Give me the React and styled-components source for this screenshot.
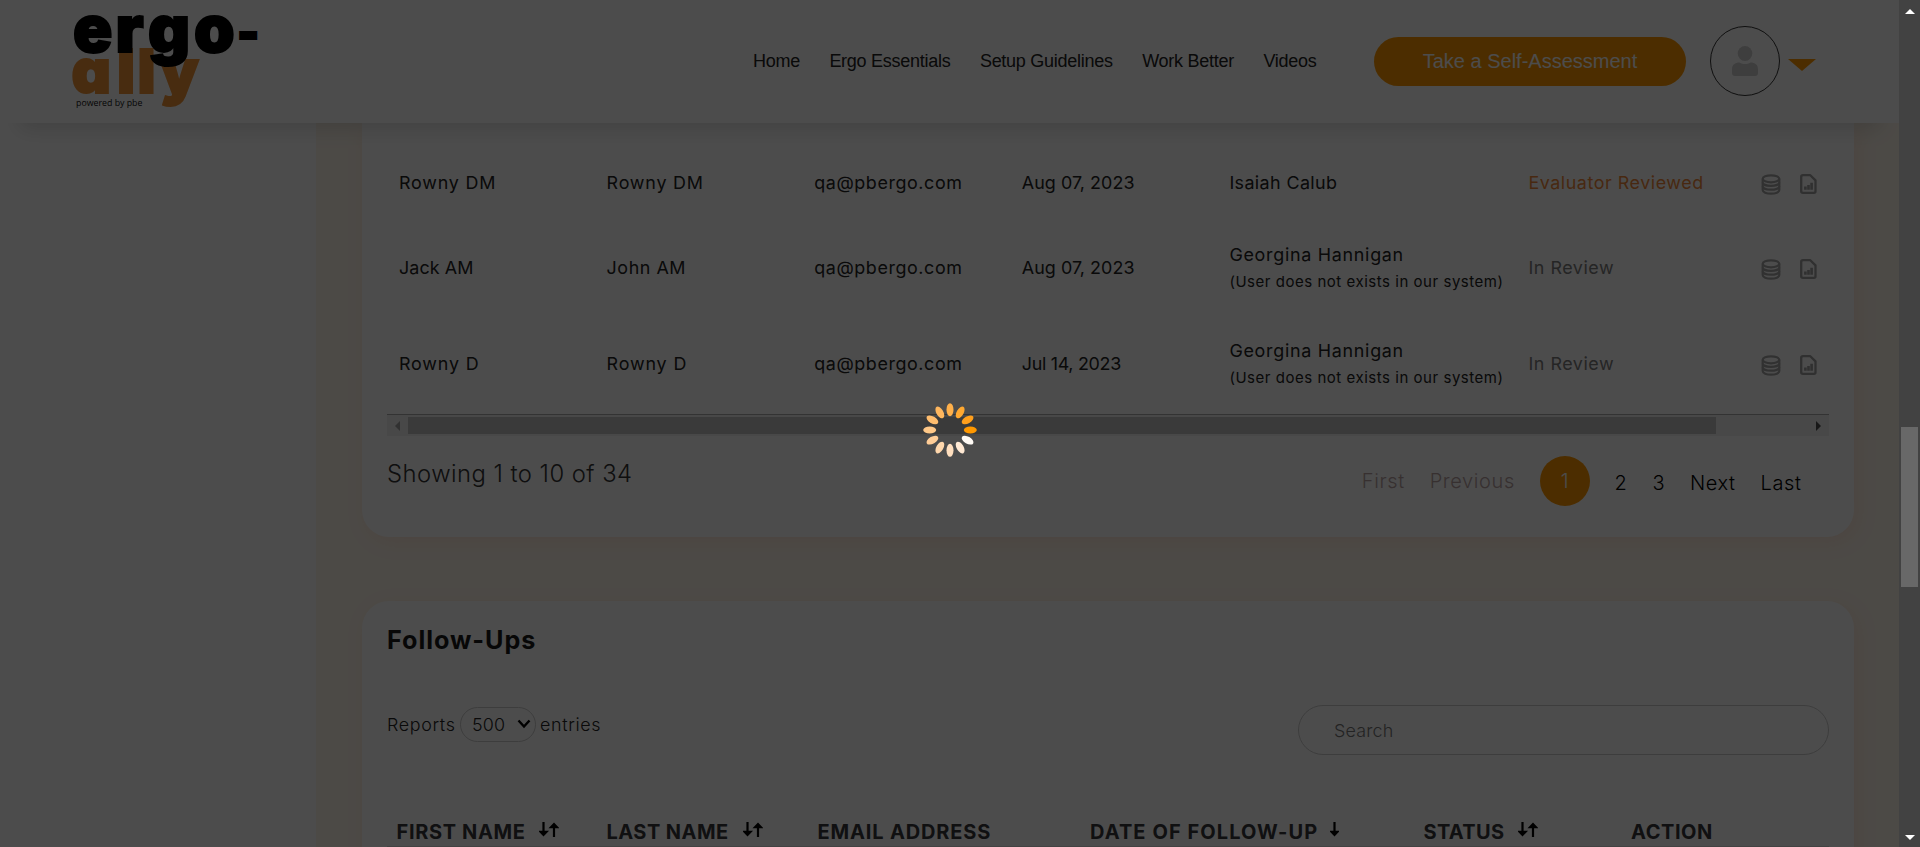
import React from "react";
import styled, { createGlobalStyle } from "styled-components";

const GlobalStyle = createGlobalStyle`
  * { box-sizing: border-box; }
  body { margin: 0; background: #fff; overflow: hidden; }
`;

const ORANGE = "#ff9800";

const Viewport = styled.div`
  display: flex;
  width: 1920px;
  height: 847px;
  overflow: hidden;
  font-family: Inter, "Open Sans", sans-serif;
`;

const Page = styled.div`
  position: relative;
  display: flex;
  flex-direction: column;
  width: 1899px;
  height: 847px;
  overflow: hidden;
  background: #fff;
`;

const Header = styled.header`
  position: relative;
  z-index: 2;
  display: flex;
  align-items: center;
  flex: 0 0 123px;
  padding: 0 83px 2px 70px;
  background: #fff;
  box-shadow: 0 25px 20px -20px rgba(0, 0, 0, 0.15);
`;

const Logo = styled.svg`
  display: block;
  align-self: flex-start;
  width: 200px;
  height: 121px;
  overflow: visible;
  font-family: Inter, sans-serif;
  font-weight: 900;
`;

const LogoTop = styled.text`
  font-size: 65px;
  fill: #000;
  stroke: #000;
  stroke-width: 2px;
`;

const LogoHyphen = styled.tspan`
  font-size: 47px;
`;

const LogoBottom = styled.text`
  font-size: 61px;
  font-feature-settings: "cv11";
  fill: #f09438;
  stroke: #f09438;
  stroke-width: 2px;
`;

const LogoNote = styled.text`
  font: 400 8.8px "Open Sans", sans-serif;
  fill: #111;
`;

const Nav = styled.nav`
  display: flex;
  gap: 29.5px;
  margin-left: auto;
  margin-right: 57.5px;
  font: 400 18px/24px "Liberation Sans", Arial, sans-serif;
  letter-spacing: -0.27px;
  color: #222;
  white-space: nowrap;
`;

const AssessButton = styled.button`
  width: 312px;
  height: 49px;
  margin: 1px 24px 0 0;
  padding: 0;
  border: 0;
  border-radius: 25px;
  background: ${ORANGE};
  color: #fff;
  font: 400 20px/49px "Liberation Sans", Arial, sans-serif;
`;

const Avatar = styled.div`
  display: grid;
  place-items: center;
  width: 70px;
  height: 70px;
  margin-right: 8px;
  border: 1px solid #333;
  border-radius: 50%;
`;

const Caret = styled.div`
  width: 0;
  height: 0;
  margin-top: 9px;
  border: 14px solid transparent;
  border-top: 12px solid ${ORANGE};
  border-bottom: 0;
`;

const Body = styled.div`
  display: flex;
  flex: 1;
  min-height: 0;
`;

const Sidebar = styled.aside`
  flex: 0 0 316px;
  background: #fff;
`;

const Main = styled.main`
  display: flex;
  flex-direction: column;
  gap: 64px;
  flex: 1;
  padding: 0 45px 0 46px;
  background: #fef7ec;
`;

const Card = styled.section`
  flex: 0 0 ${(p) => p.$height}px;
  padding: 0 25px;
  border-radius: ${(p) => (p.$continued ? "0 0 27px 27px" : "27px 27px 0 0")};
  background: #fff;
  box-shadow: 4px 5px 20px rgba(255, 130, 80, 0.13);
`;

const TableBody = styled.div`
  padding: 22.5px 0 2.5px;
`;

const Row = styled.div`
  display: grid;
  grid-template-columns: repeat(4, 207.6px) 299px 234px 1fr;
  align-items: center;
  height: ${(p) => p.$height}px;
`;

const Cell = styled.div`
  padding-left: 12px;
  font-size: 17.9px;
  line-height: 27px;
  letter-spacing: ${(p) => p.$track ?? 0.55}px;
  color: ${(p) => p.$color || "#222"};
  white-space: nowrap;
`;

const CellNote = styled.div`
  font-size: 15px;
  letter-spacing: 0.53px;
`;

const Actions = styled.div`
  display: flex;
  gap: 19px;
  padding: 4px 0 0 11px;
`;

const HScroll = styled.div`
  display: flex;
  align-items: center;
  height: 22px;
  padding: 1px 8px 0 8px;
  border-top: 1px solid #aaa;
  background: #f1f1f1;
`;

const HThumb = styled.div`
  width: 1308px;
  height: 17px;
  margin: 0 auto 2px 8px;
  background: #c1c1c1;
`;

const SideArrow = styled.div`
  width: 0;
  height: 0;
  border: 5px solid transparent;
  ${(p) => (p.$right ? "border-left: 5px solid #505050; border-right: 0;" : "border-right: 5px solid #a3a3a3; border-left: 0;")}
`;

const CardFooter = styled.div`
  display: flex;
  justify-content: space-between;
  padding: 20px 27.5px 0 0;
`;

const Summary = styled.div`
  margin-top: 2.5px;
  font-size: 23.8px;
  font-weight: 300;
  line-height: 30px;
  letter-spacing: 0.47px;
  color: #333;
`;

const Pagination = styled.div`
  display: flex;
  align-items: center;
  gap: 24.9px;
  height: 50px;
  font-size: 20px;
  font-weight: 300;
  line-height: 24px;
  letter-spacing: 0.6px;
`;

const PageLink = styled.span`
  margin-top: ${(p) => (p.$disabled ? 0 : 4)}px;
  color: ${(p) => (p.$disabled ? "#b8a2a2" : "#000")};
`;

const CurrentPage = styled.span`
  width: 50px;
  height: 50px;
  border-radius: 50%;
  background: ${ORANGE};
  color: #fff;
  line-height: 50px;
  letter-spacing: 0;
  text-align: center;
`;

const Title = styled.h2`
  margin: 0;
  padding-top: 24px;
  font-size: 25.2px;
  font-weight: 700;
  line-height: 30px;
  letter-spacing: 0.95px;
  color: #1a1a1a;
`;

const Controls = styled.div`
  display: flex;
  justify-content: space-between;
  align-items: flex-start;
  margin-top: 50px;
  font-size: 17.9px;
  font-weight: 300;
`;

const LengthControl = styled.div`
  display: flex;
  align-items: center;
  margin-top: 2px;
  letter-spacing: 0.65px;
  color: #222;
`;

const Select = styled.div`
  display: flex;
  align-items: center;
  justify-content: space-between;
  width: 76px;
  height: 35px;
  margin: 0 4px 0 4.5px;
  padding: 0 4px 0 11px;
  border: 1px solid #ccc;
  border-radius: 18px;
  letter-spacing: 0.1px;
`;

const SearchBox = styled.div`
  width: 531px;
  height: 50px;
  padding-left: 35px;
  border: 1px solid #ccc;
  border-radius: 25px;
  color: #777;
  line-height: 50px;
  letter-spacing: 0.2px;
`;

const HeadRow = styled.div`
  display: grid;
  grid-template-columns: 210px 211px 272.5px 333.5px 207.5px 1fr;
  align-items: center;
  height: 30px;
  margin-top: 62.5px;
  padding-left: 9.5px;
  border-bottom: 1px solid #ddd;
`;

const HeadCell = styled.div`
  display: flex;
  align-items: center;
  gap: ${(p) => p.$gap ?? 13}px;
  color: #37373b;
  font-size: 20px;
  font-weight: 650;
  line-height: 28px;
  letter-spacing: ${(p) => p.$track}px;
  white-space: nowrap;
`;

const SortIcon = styled.svg`
  display: block;
  margin-bottom: 4px;
`;

const Overlay = styled.div`
  position: absolute;
  inset: 0;
  z-index: 5;
  background: rgba(0, 0, 0, 0.7);
`;

const Spinner = styled.svg`
  position: absolute;
  left: 922px;
  top: 402px;
`;

const VScroll = styled.div`
  display: flex;
  flex-direction: column;
  align-items: center;
  width: 21px;
  height: 847px;
  padding: 9px 0 7px;
  background: #424242;
`;

const VThumb = styled.div`
  width: 17px;
  height: 160px;
  margin: 413px 0 auto;
  background: #686868;
`;

const UpDown = styled.div`
  width: 0;
  height: 0;
  border: 5px solid transparent;
  ${(p) => (p.$down ? "border-top: 5px solid #fff; border-bottom: 0;" : "border-bottom: 5px solid #fff; border-top: 0;")}
`;

const PersonIcon = () => (
  <svg width="26" height="30" viewBox="0 0 26 30" fill="#d0d0d0">
    <ellipse cx="13" cy="7.5" rx="7.3" ry="7.5" />
    <path d="M0 27v-3.500C0 18.500 3 16.500 7.500 16.500 9.500 17.600 11 18 13 18s3.500-.4 5.500-1.500c4.500 0 7.500 2 7.500 7V27c0 2-1 3-3 3H3c-2 0-3-1-3-3z" />
  </svg>
);

const DatabaseIcon = () => (
  <svg width="20" height="21" viewBox="0 0 20 21" fill="none" stroke="#a6a6a6" strokeWidth="2.2">
    <ellipse cx="10" cy="4.8" rx="8.3" ry="3.5" />
    <path d="M1.700 4.800v11.200c0 2.200 3.700 3.700 8.300 3.700s8.300-1.500 8.300-3.700V4.800" />
    <path d="M1.700 8.400c0 2 3.700 3.400 8.300 3.400s8.300-1.400 8.300-3.400M1.700 12.300c0 2 3.700 3.400 8.300 3.400s8.300-1.400 8.300-3.400" />
  </svg>
);

const ReportIcon = () => (
  <svg width="17" height="20" viewBox="0 0 17 20" fill="none" stroke="#a0a0a0" strokeWidth="2.3">
    <path d="M3 1.200h7.300L15.500 6.400V17.300Q15.500 18.800 14 18.800H3Q1.200 18.800 1.200 17.300V2.800Q1.200 1.200 3 1.200z" strokeLinejoin="round" />
    <path d="M5.400 15.800v-3.400M8.500 15.800v-4.800M11.600 15.800V8.800" strokeWidth="2.6" />
  </svg>
);

const Sort = ({ single }) => (
  <SortIcon width={single ? 9 : 20} height="15" viewBox={single ? "0 0 9 15" : "0 0 20 15"} stroke="#000" strokeWidth="2.2">
    <path d="M4.500 0v11M1.500 9.800h6L4.500 13z" />
    {!single && <path d="M15 15V4M12 5.200h6L15 2z" />}
  </SortIcon>
);

const petals = ["#ff9800", "#ff9f1c", "#ffa830", "#ffb04a", "#ffb75e", "#ffbd6e", "#ffc888", "#ffcd97", "#ffd7ac", "#ffdfbf", "#ffe9d4", "#fffaf5"];

const rows = [
  { first: "Rowny DM", last: "Rowny DM", date: "Aug 07, 2023", who: "Isaiah Calub", status: "Evaluator Reviewed", height: 74 },
  { first: "Jack AM", last: "John AM", date: "Aug 07, 2023", who: "Georgina Hannigan", note: true, status: "In Review", height: 96 },
  { first: "Rowny D", last: "Rowny D", date: "Jul 14, 2023", who: "Georgina Hannigan", note: true, status: "In Review", height: 96 },
];

const nameTrack = { "Jack AM": 0.1, "Rowny DM": 0.8, "Rowny D": 0.85 };

export default function App() {
  return (
    <Viewport>
      <GlobalStyle />
      <Page>
        <Header>
          <Logo viewBox="70 0 200 121">
            <LogoBottom x="71.5 117 137.500 160" y="92.500">ally</LogoBottom>
            <LogoTop x="73 115.500 148 194" y="51.500">
              ergo<LogoHyphen x="237" dy="-3">-</LogoHyphen>
            </LogoTop>
            <LogoNote x="76" y="106">powered by pbe</LogoNote>
          </Logo>
          <Nav>
            <span>Home</span>
            <span>Ergo Essentials</span>
            <span>Setup Guidelines</span>
            <span>Work Better</span>
            <span>Videos</span>
          </Nav>
          <AssessButton>Take a Self-Assessment</AssessButton>
          <Avatar><PersonIcon /></Avatar>
          <Caret />
        </Header>
        <Body>
          <Sidebar />
          <Main>
            <Card $height={413.5} $continued>
              <TableBody>
                {rows.map((r, i) => (
                  <Row key={i} $height={r.height}>
                    <Cell $track={nameTrack[r.first]}>{r.first}</Cell>
                    <Cell $track={nameTrack[r.last]}>{r.last}</Cell>
                    <Cell $track={0.6}>qa@pbergo.com</Cell>
                    <Cell $track={r.date.startsWith("Jul") ? -0.3 : 0.05}>{r.date}</Cell>
                    <Cell $track={r.note ? 0.72 : 0.4}>
                      {r.who}
                      {r.note && <CellNote>(User does not exists in our system)</CellNote>}
                    </Cell>
                    <Cell $color={r.note ? "#7c7c7c" : "#f0883a"}>{r.status}</Cell>
                    <Actions><DatabaseIcon /><ReportIcon /></Actions>
                  </Row>
                ))}
              </TableBody>
              <HScroll>
                <SideArrow />
                <HThumb />
                <SideArrow $right />
              </HScroll>
              <CardFooter>
                <Summary>Showing 1 to 10 of 34</Summary>
                <Pagination>
                  <PageLink $disabled>First</PageLink>
                  <PageLink $disabled>Previous</PageLink>
                  <CurrentPage>1</CurrentPage>
                  <PageLink>2</PageLink>
                  <PageLink>3</PageLink>
                  <PageLink>Next</PageLink>
                  <PageLink>Last</PageLink>
                </Pagination>
              </CardFooter>
            </Card>
            <Card $height={400}>
              <Title>Follow-Ups</Title>
              <Controls>
                <LengthControl>
                  Reports
                  <Select>
                    500
                    <svg width="14" height="10" viewBox="0 0 14 10" fill="none" stroke="#000" strokeWidth="2.4">
                      <path d="M1.500 1.500L7 7.500l5.500-6" />
                    </svg>
                  </Select>
                  entries
                </LengthControl>
                <SearchBox>Search</SearchBox>
              </Controls>
              <HeadRow>
                <HeadCell $track={0.65}>FIRST NAME<Sort /></HeadCell>
                <HeadCell $track={0.45} $gap={14}>LAST NAME<Sort /></HeadCell>
                <HeadCell $track={0.85}>EMAIL ADDRESS</HeadCell>
                <HeadCell $track={1.08} $gap={12}>DATE OF FOLLOW-UP<Sort single /></HeadCell>
                <HeadCell $track={0.35}>STATUS<Sort /></HeadCell>
                <HeadCell $track={0.55}>ACTION</HeadCell>
              </HeadRow>
            </Card>
          </Main>
        </Body>
        <Overlay>
          <Spinner width="56" height="56" viewBox="-28 -28 56 56">
            {petals.map((c, i) => (
              <ellipse key={c} cx="20.3" cy="0" rx="6.5" ry="3.5" fill={c} transform={`rotate(${-30 * i})`} />
            ))}
          </Spinner>
        </Overlay>
      </Page>
      <VScroll>
        <UpDown />
        <VThumb />
        <UpDown $down />
      </VScroll>
    </Viewport>
  );
}
